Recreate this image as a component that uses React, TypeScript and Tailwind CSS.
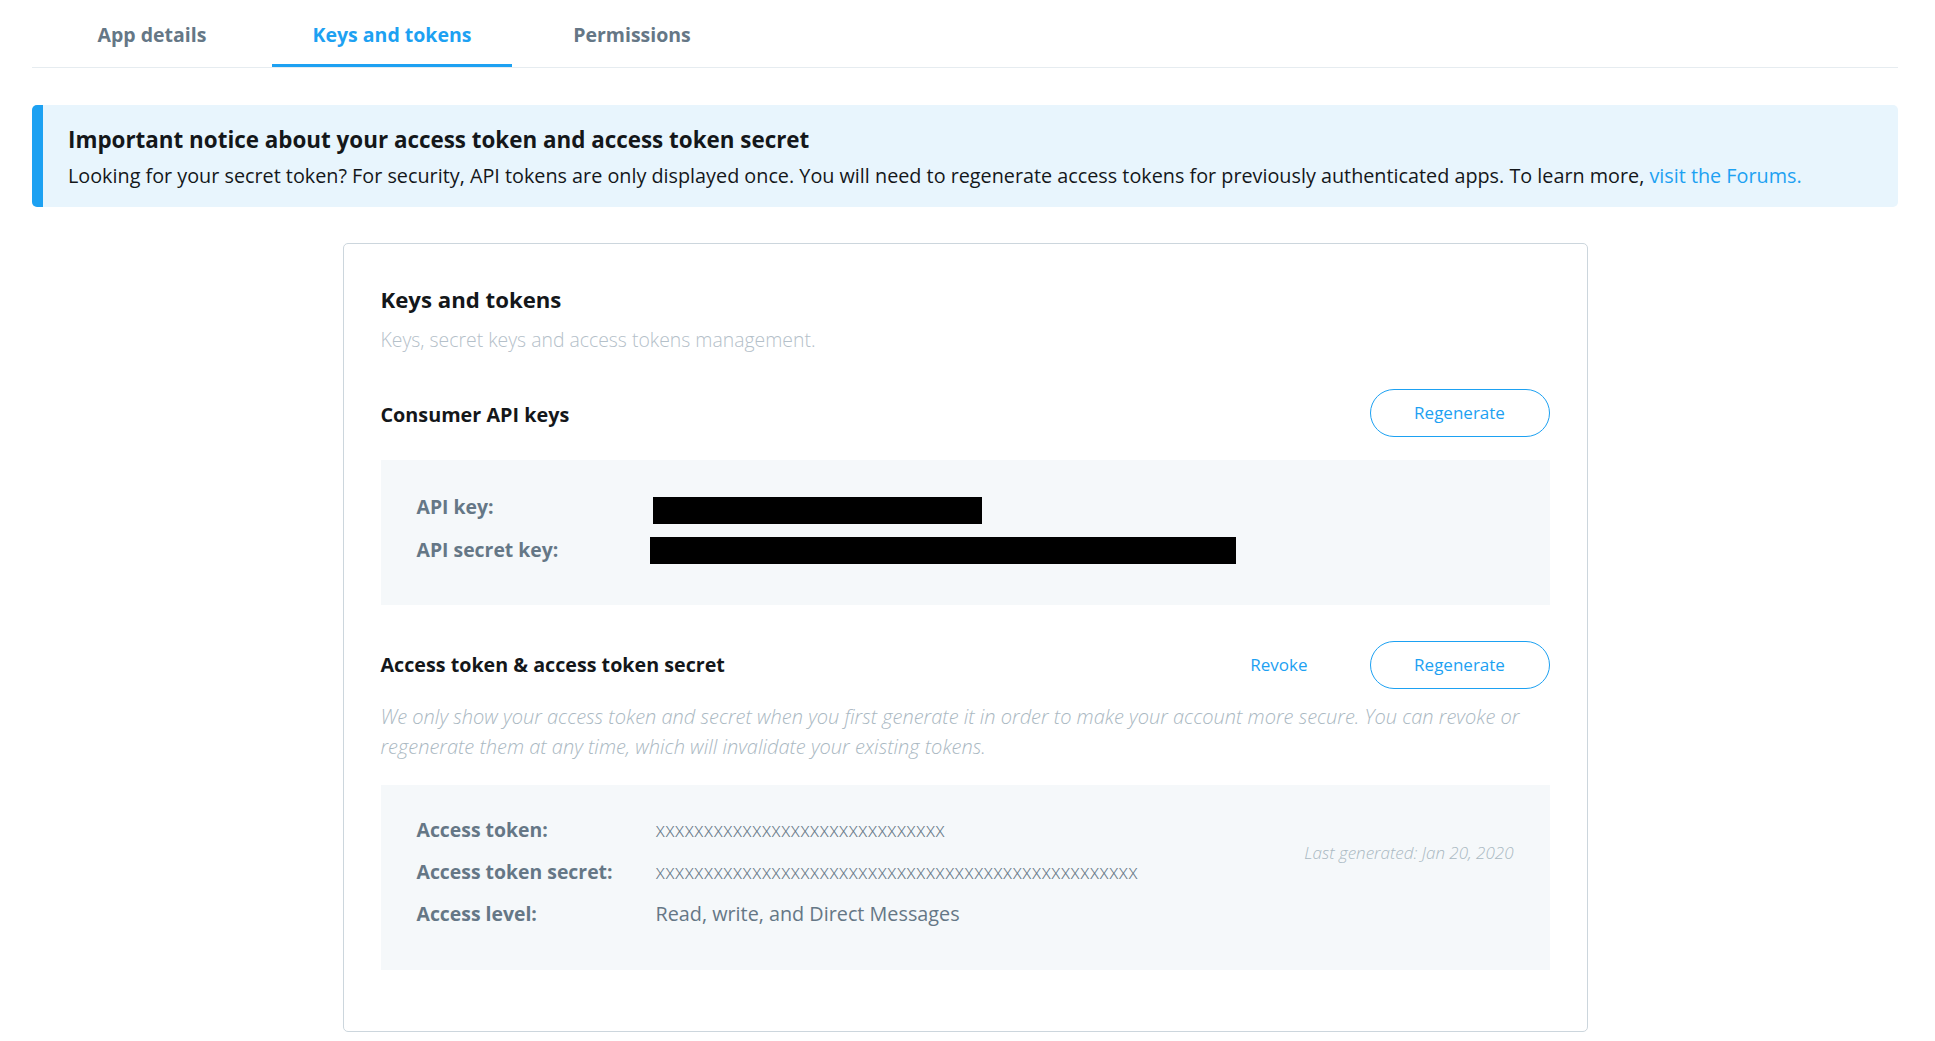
import React from "react";

const font = { fontFamily: '"Open Sans", "Noto Sans", sans-serif' };

function Tab({ label, active }: { label: string; active?: boolean }) {
  return (
    <div
      className={
        "flex h-[67px] w-[240px] items-center justify-center pt-[6px] text-[19.5px] font-bold " +
        (active ? "border-b-[3px] border-[#1da1f2] text-[#1da1f2]" : "border-b-[3px] border-transparent text-[#657786]")
      }
    >
      {label}
    </div>
  );
}

function RegenButton() {
  return (
    <button className="flex h-[48px] w-[180px] items-center justify-center rounded-full border border-[#1da1f2] bg-white text-[17px] text-[#1da1f2]">
      Regenerate
    </button>
  );
}

export default function App() {
  const x30 = "x".repeat(30);
  const x50 = "x".repeat(50);
  return (
    <div className="min-h-[1041px] bg-white pl-[32px] pr-[37px]" style={font}>
      {/* Tabs */}
      <div className="flex h-[68px] border-b border-[#e6ecf0]">
        <Tab label="App details" />
        <Tab label="Keys and tokens" active />
        <Tab label="Permissions" />
      </div>

      {/* Notice */}
      <div className="mt-[37px] flex h-[102px] overflow-hidden rounded-[5px] bg-[#e8f5fd]">
        <div className="w-[11px] shrink-0 bg-[#1da1f2]" />
        <div className="pl-[25px] pt-[19px]">
          <div className="text-[22.4px] font-bold leading-[32px] text-[#14171a]">
            Important notice about your access token and access token secret
          </div>
          <div className="mt-[6px] text-[19.8px] leading-[28px] text-[#14171a]">
            Looking for your secret token? For security, API tokens are only displayed once. You will need to regenerate
            access tokens for previously authenticated apps. To learn more,{" "}
            <span className="text-[#1da1f2]">visit the Forums.</span>
          </div>
        </div>
      </div>

      {/* Card */}
      <div className="mx-auto mt-[36px] w-[1245px] rounded-[5px] border border-[#ccd6dd] px-[37px] pb-[61px] pt-[41px]">
        <div className="text-[22.2px] font-bold leading-[30px] text-[#14171a]">Keys and tokens</div>
        <div className="mt-[11px] text-[19.4px] font-light leading-[28px] text-[#b4c0c9]">
          Keys, secret keys and access tokens management.
        </div>

        {/* Consumer API keys */}
        <div className="mt-[35px] flex h-[48px] items-center justify-between">
          <div className="mt-[3px] text-[19.8px] font-bold text-[#14171a]">Consumer API keys</div>
          <RegenButton />
        </div>
        <div className="mt-[23px] bg-[#f5f8fa] pb-[34px] pl-[36px] pt-[25px]">
          <div className="flex h-[43px] items-center">
            <div className="w-[233px] text-[19.4px] font-bold text-[#657786]">API key:</div>
            <div className="ml-[3px] mt-[8px] h-[27px] w-[329px] bg-black" />
          </div>
          <div className="flex h-[43px] items-center">
            <div className="w-[233px] text-[19.4px] font-bold text-[#657786]">API secret key:</div>
            <div className="mt-[2px] h-[27px] w-[586px] bg-black" />
          </div>
        </div>

        {/* Access token */}
        <div className="mt-[35px] flex h-[49px] items-center justify-between">
          <div className="mt-[1px] text-[19.7px] font-bold text-[#14171a]">Access token &amp; access token secret</div>
          <div className="flex items-center">
            <span className="mr-[62px] text-[17px] text-[#1da1f2]">Revoke</span>
            <RegenButton />
          </div>
        </div>
        <div className="mt-[13px] text-[20px] font-light italic leading-[30px] text-[#aab8c2]">
          We only show your access token and secret when you first generate it in order to make your account more secure.
          You can revoke or regenerate them at any time, which will invalidate your existing tokens.
        </div>
        <div className="mt-[23px] flex justify-between bg-[#f5f8fa] pb-[35px] pl-[36px] pr-[36px] pt-[24px]">
          <div>
            <div className="flex h-[42px] items-center">
              <div className="w-[239px] text-[19.4px] font-bold text-[#657786]">Access token:</div>
              <div className="text-[19.4px] font-light text-[#657786]">{x30}</div>
            </div>
            <div className="flex h-[42px] items-center">
              <div className="w-[239px] text-[19.4px] font-bold text-[#657786]">Access token secret:</div>
              <div className="text-[19.4px] font-light text-[#657786]">{x50}</div>
            </div>
            <div className="flex h-[42px] items-center">
              <div className="w-[239px] text-[19.4px] font-bold text-[#657786]">Access level:</div>
              <div className="text-[19.8px] text-[#657786]">Read, write, and Direct Messages</div>
            </div>
          </div>
          <div className="mt-[33px] self-start text-[17px] font-light italic leading-[22px] text-[#aab8c2]">
            Last generated: Jan 20, 2020
          </div>
        </div>
      </div>
    </div>
  );
}
